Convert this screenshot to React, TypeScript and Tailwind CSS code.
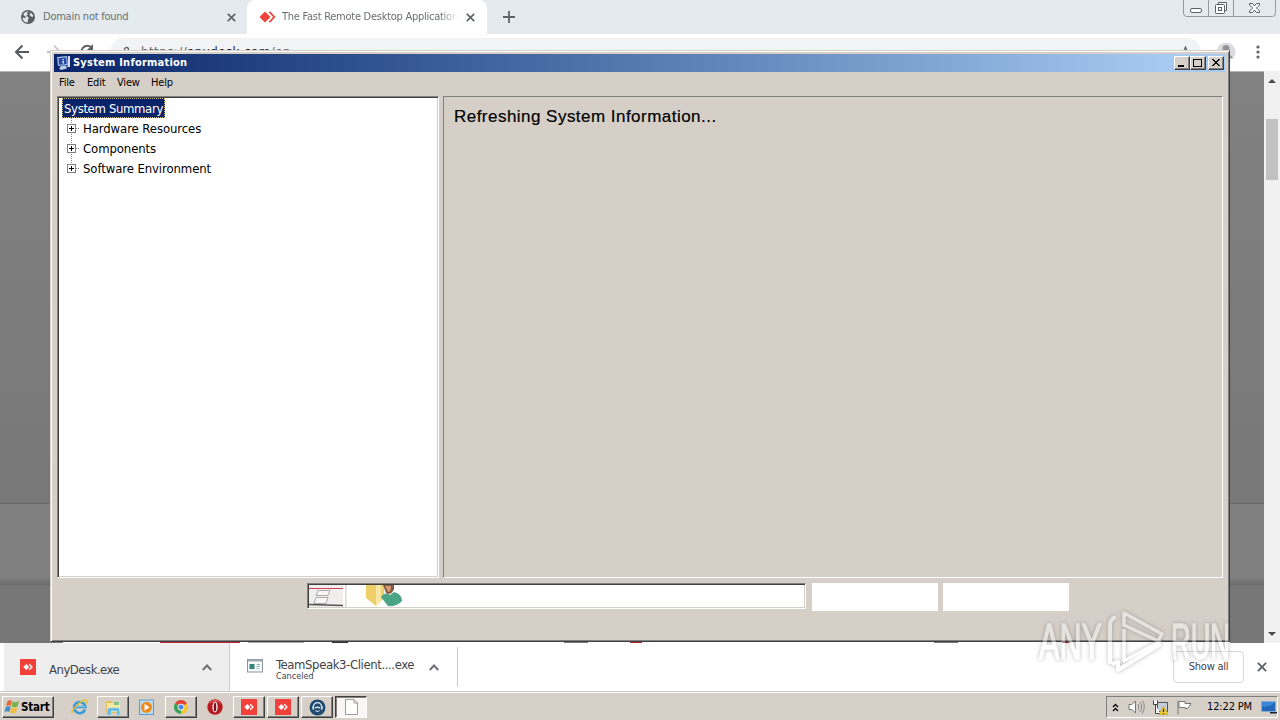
import type { ReactNode } from "react";

const tahoma = "font-['DejaVu_Sans_Condensed','DejaVu_Sans',sans-serif] [font-stretch:condensed]";

function Globe() {
  return (
    <svg width="14" height="14" viewBox="0 0 14 14">
      <circle cx="7" cy="7" r="7" fill="#5a5f64" />
      <path d="M7.500 1.500 5.800 3.200l1 1-.8 1.200-2.200.6 2.700.6 1.400 1.600-1 1.200-.2 3.200A5.600 5.600 0 0 1 1.500 7.500L4 8.200 4.600 7 2.200 4.600A5.600 5.600 0 0 1 7.500 1.500Z" fill="#e4eaed" />
      <path d="m9.500 2.200 2.800 3.300-.6 1.500-2.200-.8-1-1.700 1-.9Z" fill="#e4eaed" />
    </svg>
  );
}

function AnyDeskMark() {
  return (
    <svg width="17" height="12" viewBox="0 0 17 12">
      <path d="M6 .5 11.500 6 6 11.500.500 6Z" fill="#ef443b" />
      <path d="m9.700 1.300 1.300-1.100L16.500 6 11 11.800l-1.300-1.100L14 6Z" fill="#ef443b" />
    </svg>
  );
}

function AnyDeskTile() {
  return (
    <svg width="16" height="16" viewBox="0 0 16 16">
      <path d="M0 0h16v16H0Z" fill="#f2403a" />
      <path d="m6.300 5 3 3-3 3-3-3Z" fill="#fff" />
      <path d="m9.200 5.200 2.800 2.800-2.800 2.800" stroke="#fff" strokeWidth="1.300" fill="none" />
    </svg>
  );
}

function Cross({ size = 9, color = "#5f6368" }: { size?: number; color?: string }) {
  return (
    <svg width={size} height={size} viewBox="0 0 9 9">
      <path d="m.8.8 7.400 7.400M8.200.8.8 8.200" stroke={color} strokeWidth="1.700" />
    </svg>
  );
}

function BrowserTabs() {
  return (
    <div className="relative flex h-[34px] shrink-0 bg-[#e4eaed] text-[#6a6f74]">
      <div className="flex w-[247px] items-center pl-[21px]">
        <Globe />
        <span className="mt-px ml-2 w-[184px] text-[11px] tracking-[-0.24px]">Domain not found</span>
        <Cross />
      </div>
      <div className="flex w-60 items-center rounded-t-lg bg-white pl-[12px]">
        <AnyDeskMark />
        <span className="mt-px ml-1.5 w-[176px] overflow-hidden text-[11px] tracking-[-0.26px] whitespace-nowrap [mask-image:linear-gradient(90deg,#000_90%,transparent)]">
          The Fast Remote Desktop Application
        </span>
        <span className="ml-2"><Cross /></span>
      </div>
      <svg className="mt-[11px] ml-4" width="12" height="12" viewBox="0 0 12 12">
        <path d="M6 0v12M0 6h12" stroke="#5f6368" strokeWidth="1.800" />
      </svg>
      <svg className="absolute top-0 right-[4px]" width="93" height="17" viewBox="0 0 93 17" fill="none">
        <path d="M.5 0v13q0 3.500 3 3.500h86q3 0 3-3.500V0M25.500 0v16M50.500 0v16" stroke="#929ba1" />
        <rect x="7.500" y="8.500" width="11" height="4" rx="1.500" fill="#fff" stroke="#56606a" />
        <path d="M35.500 4.500v-2h8v8h-2" fill="#fff" stroke="#56606a" />
        <rect x="32.500" y="4.500" width="9" height="9" rx="1" fill="#fff" stroke="#56606a" />
        <rect x="35.500" y="7.500" width="3" height="3" stroke="#56606a" />
        <path d="M66.500 3.500h3l2 2.500 2-2.500h3v1.500L73.500 8l3 3v1.500h-3l-2-2.500-2 2.500h-3V11l3-3-3-3Z" fill="#fff" stroke="#56606a" />
      </svg>
    </div>
  );
}

function BrowserToolbar() {
  return (
    <div className="relative flex h-[37px] shrink-0 items-start bg-white">
      <svg className="absolute top-0 left-0" width="110" height="37" viewBox="0 0 110 37" fill="none">
        <path d="M29 18H16m6.500-6.500L16 18l6.500 6.500" stroke="#55595d" strokeWidth="2" />
        <path d="M47 18h13m-6-6.500 6 6.500-6 6.500" stroke="#bfc1c4" strokeWidth="1.800" />
        <path d="M92 14a6 6 0 1 0 1 6" stroke="#5f6368" strokeWidth="2" />
        <path d="M93 10v7h-7Z" fill="#5f6368" />
      </svg>
      <div className="mt-1 ml-[110px] flex h-7 w-[1091px] items-center rounded-full bg-[#f1f3f4] pl-3">
        <svg width="9" height="13" viewBox="0 0 9 13" fill="none">
          <rect x=".7" y="5" width="7.600" height="7" stroke="#5f6368" strokeWidth="1.400" />
          <path d="M2.500 5V3.500a2 2 0 0 1 4 0V5" stroke="#5f6368" strokeWidth="1.300" />
        </svg>
        <span className="ml-[10px] text-[13px] tracking-[0.53px] text-[#5f6368]">
          https://<span className="text-[#202124]">anydesk.com</span>/en
        </span>
        <svg className="ml-auto mr-[9px]" width="13" height="13" viewBox="0 0 13 13">
          <path d="m6.500 1 1.600 4 4.100.2L9 8l1 4-3.500-2.200L3 12l1-4L.8 5.200 4.900 5Z" fill="none" stroke="#5f6368" strokeWidth="1.300" />
        </svg>
      </div>
      <svg className="ml-[15px] mt-[8px]" width="20" height="20" viewBox="0 0 20 20">
        <circle cx="10" cy="10" r="9.500" fill="#dadce0" />
        <circle cx="10" cy="6.500" r="3.500" fill="#8f9397" />
        <path d="M3 16q7-9 14 0Z" fill="#8f9397" />
      </svg>
      <svg className="ml-[20px] mt-[11px]" width="4" height="14" viewBox="0 0 4 14" fill="#5f6368">
        <circle cx="2" cy="2" r="1.600" /><circle cx="2" cy="7" r="1.600" /><circle cx="2" cy="12" r="1.600" />
      </svg>
    </div>
  );
}

function PageView() {
  return (
    <div className="flex h-[572px] shrink-0">
      <div className="flex w-[1264px] flex-col">
        <div className="h-[432px] border-t border-[#b5b5b5] bg-linear-to-b from-[#818181] to-[#787878]" />
        <div className="h-[82px] border-t border-[#686868] bg-linear-to-b from-[#808080] from-90% to-[#6c6c6c]" />
        <div className="h-[56px] bg-[#777]" />
        <div className="flex h-[2px] bg-white">
          <div className="w-[63px] bg-[#777]" />
          <div className="ml-[97px] w-20 bg-[#c42035]" />
          <div className="ml-2 w-14 bg-[#aaa]" />
          <div className="ml-7 w-4 bg-[#333]" />
          <div className="ml-[216px] w-6 bg-[#777]" />
          <div className="ml-[42px] w-3 bg-[#a22]" />
          <div className="ml-[292px] w-6 bg-[#777]" />
          <div className="ml-[104px] w-2 bg-[#a22]" />
          <div className="ml-auto w-[34px] bg-[#777]" />
        </div>
      </div>
      <div className="flex w-4 flex-col items-center bg-[#f1f1f1]">
        <svg className="mt-[8px]" width="8" height="4" viewBox="0 0 8 4"><path d="M0 4 4 0l4 4Z" fill="#4b4b4b" /></svg>
        <div className="mt-[36px] h-[61px] w-3 bg-[#c1c1c1]" />
        <svg className="mt-auto mb-[7px]" width="8" height="4" viewBox="0 0 8 4"><path d="m0 0 4 4 4-4Z" fill="#4b4b4b" /></svg>
      </div>
    </div>
  );
}

function Chevron() {
  return (
    <svg width="10" height="7" viewBox="0 0 10 7">
      <path d="m.8 6 4.200-4.500L9.200 6" stroke="#6a6e72" strokeWidth="1.900" fill="none" />
    </svg>
  );
}

function DownloadBar() {
  return (
    <div className="flex h-[49px] shrink-0 border-b border-[#c9c7c4] bg-white pl-1 text-[#3f4347]">
      <div className="mr-px flex w-[226px] items-center border-r border-[#ccc] bg-[#eee] pt-px pl-4">
        <span className="-mt-[2px]"><AnyDeskTile /></span>
        <span className="mt-[4px] ml-[13px] w-[153px] text-[13px] tracking-[-0.5px]">AnyDesk.exe</span>
        <Chevron />
      </div>
      <div className="mt-[4px] mb-[4px] flex w-[227px] border-r border-[#ccc] pl-4">
        <svg className="mt-[12px]" width="16" height="14" viewBox="0 0 16 14">
          <rect x=".5" y=".5" width="15" height="12.500" fill="#f6fafa" stroke="#89979c" />
          <path d="M1 1.500h14" stroke="#9fabb0" strokeWidth="2" />
          <path d="M2.500 5h5v5h-5Z" fill="#35827d" />
          <path d="M9.500 5.500H13m-3.500 2H13m-3.500 2H12" stroke="#92b5bb" />
        </svg>
        <div className="ml-[13px] flex w-[153px] flex-col pt-[11px]">
          <span className="text-[13px] leading-[14px] tracking-[-0.4px] whitespace-nowrap">TeamSpeak3-Client....exe</span>
          <span className="text-[9px] leading-[9px]">Canceled</span>
        </div>
        <span className="flex pt-[17px]"><Chevron /></span>
      </div>
      <div className="mt-[8px] ml-auto flex h-8 w-[71px] items-center justify-center rounded border border-[#d5d7da] pt-px text-[11px] tracking-[-0.25px]">Show all</div>
      <span className="mt-[19px] mr-[13px] ml-[13px]"><Cross size={10} /></span>
    </div>
  );
}

function TaskButton({ children, pressed = false }: { children: ReactNode; pressed?: boolean }) {
  return (
    <div className={pressed
      ? "flex h-[22px] w-8 items-center justify-center border border-t-[#404040] border-l-[#404040] border-r-white border-b-white bg-[#f8f7f5] shadow-[inset_1px_1px_#808080]"
      : "flex h-[22px] w-8 items-center justify-center border border-t-white border-l-white border-r-[#404040] border-b-[#404040] bg-[#d6d0c8] shadow-[inset_-1px_-1px_#808080]"}>
      {children}
    </div>
  );
}

function Ie() {
  return (
    <svg width="17" height="16" viewBox="0 0 17 16" fill="none">
      <path d="M14 10.500A5.600 5.600 0 1 1 14.300 8H5" stroke="#379ad8" strokeWidth="2.600" />
      <path d="M14.300 7.600H5" stroke="#77c8ef" strokeWidth="1.200" />
      <path d="M1.200 14.500C-.5 11 12-.8 15.500 1.300c1 .7.500 2.200-.2 3.200" stroke="#e8bd37" strokeWidth="1.500" />
    </svg>
  );
}

function Folder() {
  return (
    <svg width="17" height="17" viewBox="0 0 17 17">
      <path d="M1 2h6l1 2h7v10H1Z" fill="#e6bf5c" />
      <path d="M2 4h13v9H2Z" fill="#f8e9a0" />
      <path d="M9 3h5v3H9Z" fill="#7cc48c" />
      <path d="M3 9h11l1 7h-3v-4H6v4H2Z" fill="#62b5dc" stroke="#a4dcf2" strokeWidth=".7" />
    </svg>
  );
}

function MediaPlayer() {
  return (
    <svg width="17" height="17" viewBox="0 0 17 17">
      <rect x="1.500" y="1" width="14" height="14.500" fill="#badcf3" stroke="#5b9cd0" />
      <circle cx="8.500" cy="8.300" r="5.500" fill="#f08a19" />
      <path d="m6.500 4.800 5 3.500-5 3.500Z" fill="#fff" />
    </svg>
  );
}

function Chrome() {
  return (
    <svg width="14" height="14" viewBox="0 0 15 15">
      <path d="M7.500 7.500 1 3.700A7.500 7.500 0 0 1 14 3.700Z" fill="#e34335" />
      <path d="M7.500 7.500 14 3.700A7.500 7.500 0 0 1 7.500 15Z" fill="#f5c62e" />
      <path d="M7.500 7.500V15A7.500 7.500 0 0 1 1 3.700Z" fill="#3ba255" />
      <circle cx="7.500" cy="7.500" r="3.600" fill="#fff" /><circle cx="7.500" cy="7.500" r="2.700" fill="#4686e8" />
    </svg>
  );
}

function Opera() {
  return (
    <svg width="16" height="16" viewBox="0 0 16 16">
      <circle cx="8" cy="8" r="7.700" fill="#b91921" />
      <path d="M2 5a6.500 6.500 0 0 1 12 0Q8-1 2 5Z" fill="#e66e6e" />
      <ellipse cx="8" cy="8" rx="2.600" ry="5.400" fill="#fff" /><ellipse cx="8" cy="8" rx="1.300" ry="4.600" fill="#80101a" />
    </svg>
  );
}

function TeamSpeak() {
  return (
    <svg width="17" height="17" viewBox="0 0 17 17" fill="none">
      <circle cx="8.500" cy="8.500" r="8" fill="#234a70" />
      <path d="M4.300 8.500V7.800a4.200 4.200 0 0 1 8.400 0v.7" stroke="#e2edf5" strokeWidth="1.200" />
      <path d="M3.300 7.500v2.700l1.800.5V7Zm10.400 0v2.700l-1.800.5V7Z" fill="#d7e5ef" />
      <path d="M6 8.200q2.500-1.500 5 0v1.300q-2.500-.8-5 0ZM5.500 11q3 3.800 6 0l-3 .9Z" fill="#d7e5ef" />
    </svg>
  );
}

function Taskbar() {
  return (
    <div className="flex h-[28px] shrink-0 items-start border-t border-white bg-[#d6d0c8] pt-[3px] text-black">
      <div className="ml-[2px] flex h-[22px] w-[52px] items-center border border-t-white border-l-white border-r-[#404040] border-b-[#404040] pl-[1px] shadow-[inset_-1px_-1px_#808080]">
        <svg width="16" height="16" viewBox="0 0 16 16">
          <path d="M3.500 2Q6 .5 8 2L6.800 7Q4.500 5.700 2.200 7Z" fill="#e66a35" />
          <path d="M8.800 2.500Q12 4 15 2L13.500 7.500Q10.500 9 7.600 7.400Z" fill="#78b44c" />
          <path d="M2 7.800Q4.200 6.500 6.500 7.800L5.300 13Q3 11.500.5 13Z" fill="#428ccc" />
          <path d="M7.400 8.200Q10.300 9.800 13.200 8.300L12 13.500Q9 15 6 13.500Z" fill="#edc13d" />
        </svg>
        <span className="mt-px ml-px text-[11.500px] font-bold tracking-[-0.2px]">Start</span>
      </div>
      <div className="ml-[17px] pt-[3px]"><Ie /></div>
      <div className="ml-[9px]"><TaskButton><Folder /></TaskButton></div>
      <div className="ml-[9px] pt-[3px]"><MediaPlayer /></div>
      <div className="ml-[10px]"><TaskButton><Chrome /></TaskButton></div>
      <div className="ml-[10px] pt-[3px]"><Opera /></div>
      <div className="ml-[10px] flex gap-0.5">
        <TaskButton><AnyDeskTile /></TaskButton>
        <TaskButton><AnyDeskTile /></TaskButton>
        <TaskButton><TeamSpeak /></TaskButton>
        <TaskButton pressed>
          <svg width="13" height="16" viewBox="0 0 13 16"><path d="M.5.500h8.500l3.500 3.500v11.500H.5Z" fill="#fff" stroke="#9a9a9a" /><path d="M9 .5V4h3.500" fill="none" stroke="#9a9a9a" /></svg>
        </TaskButton>
      </div>
      <div className="ml-auto mr-[2px] flex h-[22px] w-[172px] items-center border border-t-[#808080] border-l-[#808080] border-r-white border-b-white pl-[5px]">
        <svg width="7" height="9" viewBox="0 0 7 9"><path d="m1 4 2.500-2.500L6 4M1 8l2.500-2.500L6 8" fill="none" stroke="#000" strokeWidth="1.300" /></svg>
        <svg className="ml-[9px]" width="17" height="16" viewBox="0 0 17 16" fill="none">
          <path d="M1 5.500h3L7.500 2v12L4 10.500H1Z" fill="#fff" stroke="#777" />
          <path d="M10 5q2 3 0 6m2-8q3.500 5 0 10m2.300-11.500q4 6 0 13" stroke="#888" />
        </svg>
        <svg className="ml-[7px]" width="17" height="17" viewBox="0 0 17 17" fill="none">
          <path d="M5.500 3.500h10v9h-10Z" fill="#c3cfdb" stroke="#555" /><path d="M1.500 1.500v4h4v-4M3.500 5.500v9H8" fill="#fff" stroke="#444" />
          <path d="m11.500 7 4.500 8.500H7Z" fill="#f0d32c" stroke="#bb9b16" strokeWidth=".6" /><path d="M11.500 10v3m0 1v1" stroke="#221" strokeWidth="1.200" />
        </svg>
        <svg className="ml-[7px]" width="17" height="16" viewBox="0 0 17 16"><path d="M2 1.500v14M3 2.500h6v2h6l-2 3-1.500 2H9v-1H3Z" fill="#fff" stroke="#777" /></svg>
        <span className="mt-px ml-auto text-[11px] tracking-[-0.15px] whitespace-nowrap">12:22 PM</span>
        <svg className="ml-[9px]" width="16" height="14" viewBox="0 0 16 14"><path d="M.5 1.500h14v10H.5Z" fill="#2267b8" stroke="#87acd4" /><path d="M1 2h13l-5 4-8 1Z" fill="#3a87d7" /><path d="M9 12h7v1.500H9Z" fill="#17202c" /></svg>
      </div>
    </div>
  );
}

function CaptionButton({ children }: { children: ReactNode }) {
  return (
    <span className="flex h-[14px] w-4 border border-t-white border-l-white border-r-[#404040] border-b-[#404040] bg-[#d6d0c8] shadow-[inset_-1px_-1px_#808080]">
      <svg width="14" height="12" viewBox="0 0 14 12" fill="none" stroke="#000" shapeRendering="crispEdges">{children}</svg>
    </span>
  );
}

function TreeItem({ label, last = false }: { label: string; last?: boolean }) {
  return (
    <div className="flex h-5 items-center pl-[5px]">
      <svg width="18" height="20" viewBox="0 0 18 20" shapeRendering="crispEdges" fill="none">
        <path d={last ? "M6.500 0v10" : "M6.500 0v20"} stroke="#808080" strokeDasharray="1 1" />
        <path d="M11 10.500h4" stroke="#808080" strokeDasharray="1 1" />
        <rect x="2.500" y="6.500" width="8" height="8" fill="#fff" stroke="#808080" />
        <path d="M4 10.500h5M6.500 8v5" stroke="#000" />
      </svg>
      <span className="pt-[2px] text-[13px] leading-[18px] tracking-[-0.09px] whitespace-nowrap">{label}</span>
    </div>
  );
}

function SystemInformation() {
  return (
    <div className="absolute top-[50px] left-[50px] flex h-[592px] w-[1180px] flex-col border border-t-[#d4d0c8] border-r-[#404040] border-b-[#404040] border-l-[#d4d0c8] bg-[#d6cfc8] p-[3px] text-black shadow-[inset_1px_1px_#fff,inset_-1px_-1px_#808080]">
      <div className="mr-px flex h-[18px] shrink-0 items-center bg-linear-to-r from-[#0a246a] to-[#a6caf0] to-95% pr-px pl-[2px]">
        <svg width="15" height="16" viewBox="0 0 15 16">
          <path d="M1 2 11 1l1 9-10 1Z" fill="#9ebbe8" /><path d="m2.500 3.300 7.500-.8.700 6.500-7.500.8Z" fill="#2548a5" />
          <path d="M12 1h2v11h-3l1-2Z" fill="#d7dfed" /><path d="m5 11 5-.5 1 3-6 1.500-2-1.500Z" fill="#bbcae3" />
          <path d="M6.500 4h1.300v1.200H6.500Zm0 1.900h1.300v2.600H6.500Z" fill="#fff" />
        </svg>
        <span className="mt-px ml-[2px] text-[11px] font-bold tracking-[0.22px] whitespace-nowrap text-white">System Information</span>
        <div className="ml-auto flex">
          <CaptionButton><path d="M3 9h6" strokeWidth="2" /></CaptionButton>
          <CaptionButton><path d="M2.500 2.500h8v7h-8ZM2 2h9" /></CaptionButton>
          <span className="ml-[2px]"><CaptionButton><path d="m3 2 7 7M4 2l7 7m-1-7L3 9m8-7L4 9" strokeWidth=".9" /></CaptionButton></span>
        </div>
      </div>
      <div className="flex h-[24px] shrink-0 pt-[3px] pl-[5px] text-[11px] tracking-[-0.2px]">
        <span className="w-[28px]">File</span><span className="w-[30px]">Edit</span><span className="w-[34px]">View</span><span>Help</span>
      </div>
      <div className="flex h-[482px] shrink-0 pl-[3px]">
        <div className="w-[382px] border border-t-[#808080] border-l-[#808080] border-r-white border-b-white bg-white pt-px pl-[2px] shadow-[inset_1px_1px_#404040,inset_-1px_-1px_#d4d0c8]">
          <div className="ml-[2px] flex h-5 w-[103px] items-center border border-dotted border-[#d6bf7a] bg-[#0a246a] pl-px">
            <span className="pt-[2px] text-[13px] leading-[16px] tracking-[-0.35px] whitespace-nowrap text-white">System Summary</span>
          </div>
          <TreeItem label="Hardware Resources" />
          <TreeItem label="Components" />
          <TreeItem label="Software Environment" last />
        </div>
        <div className="ml-1 w-[780px] border border-t-[#808080] border-l-[#808080] border-r-white border-b-white pt-[7px] pl-[10px]">
          <span className="font-['Liberation_Sans',sans-serif] text-[17px] tracking-[0.47px] [-webkit-text-stroke:0.2px_#000]">Refreshing System Information...</span>
        </div>
      </div>
      <div className="mt-[5px] flex pl-[253px]">
        <div className="h-[26px] w-[499px] border border-t-[#808080] border-l-[#808080] border-r-white border-b-white bg-white pt-px pl-px shadow-[inset_1px_1px_#404040,inset_-1px_-1px_#d4d0c8]">
          <svg width="100" height="22" viewBox="0 0 100 22">
            <path d="M0 0h34v22H0Z" fill="#f0efed" /><path d="M0 3.500h34" stroke="#cf4256" />
            <path d="M9 5.500h12l-2 5H7ZM7 12.500h12l-2 6H5Z" fill="#f7f7f7" stroke="#aaa" />
            <path d="M0 19.500 34 20.500" stroke="#555" strokeWidth="1.300" /><path d="M36 0h1.500v22H36Z" fill="#e0d6ce" />
            <path d="M57 0h18v13l-8 8-10-8Z" fill="#f0cf68" /><path d="M67 0h5v17l-5 4Z" fill="#f9e6a2" />
            <path d="M74 0h11v4q-3 7-8 4Z" fill="#85573c" /><path d="M76 1h6q0 6-3 6Z" fill="#d49a72" />
            <path d="M72 12q4-6 9-2l4-3q8 2 8 9-5 6-14 5Z" fill="#4ca487" />
          </svg>
        </div>
        <div className="ml-[6px] h-[28px] w-[126px] bg-white" />
        <div className="ml-[5px] h-[28px] w-[126px] bg-white" />
      </div>
    </div>
  );
}

function Watermark() {
  return (
    <svg className="pointer-events-none absolute top-[604px] left-[1030px] [filter:drop-shadow(0_0_2px_rgba(70,70,70,.9))]" width="210" height="74" viewBox="0 0 210 74" fill="none" opacity=".42">
      <g fill="#fff" stroke="#fff" strokeWidth="1.600" fontFamily="'Liberation Sans', sans-serif" fontSize="50">
        <text x="9" y="55" textLength="63" lengthAdjust="spacingAndGlyphs">ANY</text>
        <text x="141" y="55" textLength="59" lengthAdjust="spacingAndGlyphs">RUN</text>
      </g>
      <path d="M94 9v12l34 16 4-7ZM94 25v32l37-20" stroke="#fff" strokeWidth="3.500" strokeLinejoin="round" />
      <path d="M80 60V21q0-6 6-8M82 60l6-2v8l43-26" stroke="#fff" strokeWidth="4" strokeLinejoin="round" />
    </svg>
  );
}

export default function App() {
  return (
    <div className={`relative flex h-[720px] w-[1280px] flex-col overflow-hidden ${tahoma}`}>
      <BrowserTabs />
      <BrowserToolbar />
      <PageView />
      <DownloadBar />
      <Taskbar />
      <SystemInformation />
      <Watermark />
    </div>
  );
}
